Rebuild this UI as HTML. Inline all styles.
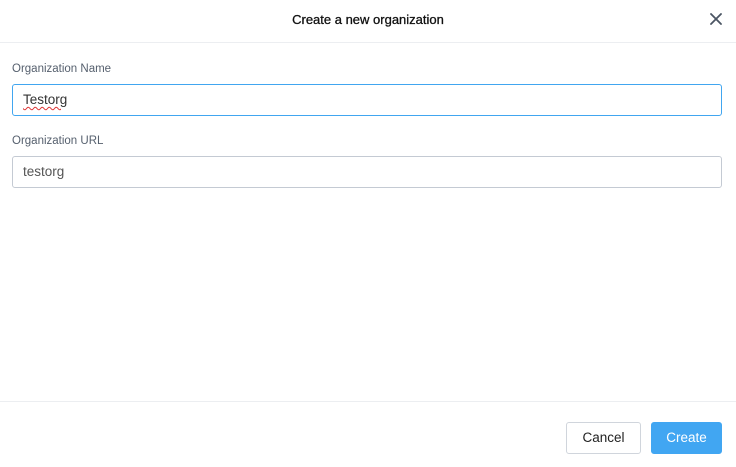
<!DOCTYPE html>
<html><head><meta charset="utf-8"><style>
*{box-sizing:border-box;margin:0;padding:0}
body{width:736px;height:467px;background:#fff;font-family:"Liberation Sans",sans-serif;position:relative;overflow:hidden}
.title{position:absolute;top:0;left:0;width:736px;height:43px;line-height:39px;text-align:center;font-size:13px;color:#111;-webkit-text-stroke:0.3px #111;border-bottom:1px solid #eceef1}
.x{position:absolute;left:710px;top:13px;width:12px;height:12px}
.lbl{position:absolute;left:12px;font-size:11.5px;color:#56606e}
.inp{position:absolute;left:12px;width:710px;height:32px;border:1px solid #c4cad3;border-radius:3px;padding-left:10px;line-height:30px;font-size:13.5px;color:#555}
.inp.f{border-color:#41a6f0;color:#333}
.sq{text-decoration:underline wavy #d33;text-decoration-thickness:1px;text-underline-offset:2px}
.foot{position:absolute;left:0;top:401px;width:736px;border-top:1px solid #eceef1}
.btn{position:absolute;top:422px;height:32px;border-radius:3px;font-size:13.5px;text-align:center;line-height:30px}
.c{left:566px;width:75px;border:1px solid #d0d5dc;color:#222}
.k{left:651px;width:71px;background:#41a6f2;color:#fff;border:1px solid #41a6f2}
</style></head><body>
<div class="title">Create a new organization</div>
<svg class="x" viewBox="0 0 12 12"><path d="M1 1L11 11M11 1L1 11" stroke="#4b5563" stroke-width="1.8" stroke-linecap="round"/></svg>
<div class="lbl" style="top:63px">Organization Name</div>
<div class="inp f" style="top:84px"><span class="sq">Testorg</span></div>
<div class="lbl" style="top:135px">Organization URL</div>
<div class="inp" style="top:156px">testorg</div>
<div class="foot"></div>
<div class="btn c">Cancel</div>
<div class="btn k">Create</div>
</body></html>
